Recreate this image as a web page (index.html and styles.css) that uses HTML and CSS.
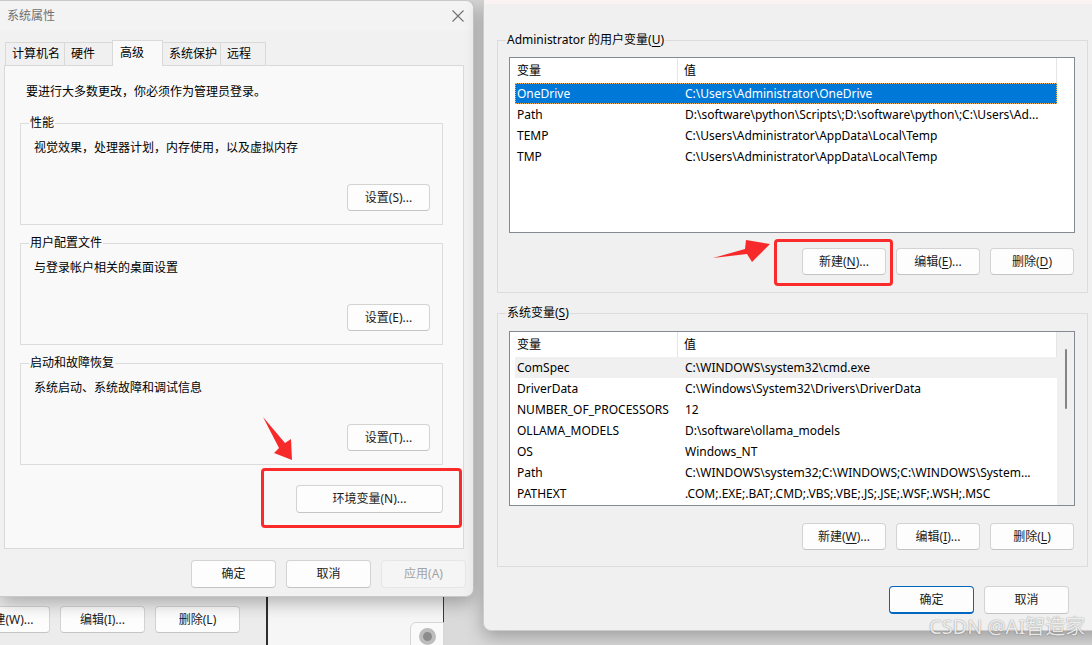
FILE: index.html
```html
<!DOCTYPE html>
<html lang="zh-CN">
<head>
  <meta charset="UTF-8" />
  <title>系统属性 - 环境变量</title>
  <link rel="stylesheet" href="styles.css">
</head>
<body>
<div class="desk">

  <!-- windows lying behind the two dialogs -->
  <div class="backwin">
    <div class="btnrow">
      <button class="btn">新建(W)...</button>
      <button class="btn">编辑(I)...</button>
      <button class="btn">删除(L)</button>
    </div>
  </div>
  <div class="backwin2">
    <div class="tray-card"><span class="tray-icon"></span></div>
  </div>

  <!-- 系统属性 -->
  <div class="dialog sysprop">
    <div class="titlebar">
      <span>系统属性</span>
      <svg class="close" width="14" height="14" viewBox="0 0 14 14">
        <path d="M1.5 1.5L12.5 12.5M12.5 1.5L1.5 12.5" stroke="#707070" stroke-width="1.1" fill="none"/>
      </svg>
    </div>

    <div class="tabs">
      <div class="tab w1">计算机名</div>
      <div class="tab w2">硬件</div>
      <div class="tab w3 active">高级</div>
      <div class="tab w4">系统保护</div>
      <div class="tab w5">远程</div>
    </div>

    <div class="panel">
      <p class="intro">要进行大多数更改，你必须作为管理员登录。</p>

      <div class="group">
        <div class="group-title">性能</div>
        <div class="desc">视觉效果，处理器计划，内存使用，以及虚拟内存</div>
        <div class="actions"><button class="btn">设置(S)...</button></div>
      </div>

      <div class="group">
        <div class="group-title">用户配置文件</div>
        <div class="desc">与登录帐户相关的桌面设置</div>
        <div class="actions"><button class="btn">设置(E)...</button></div>
      </div>

      <div class="group">
        <div class="group-title">启动和故障恢复</div>
        <div class="desc">系统启动、系统故障和调试信息</div>
        <div class="actions"><button class="btn">设置(T)...</button></div>
      </div>

      <div class="actions env"><button class="btn wide">环境变量(N)...</button></div>
    </div>

    <div class="footer">
      <button class="btn big">确定</button>
      <button class="btn big">取消</button>
      <button class="btn big" disabled>应用(A)</button>
    </div>
  </div>

  <!-- 环境变量 -->
  <div class="dialog envvars">
    <div class="topstrip"></div>
    <div class="envbody">
      <div class="group vars">
        <div class="group-title">Administrator 的用户变量(<u>U</u>)</div>
        <div class="listbox">
          <div class="cols">
            <div class="lhead"><div class="c1">变量</div><div class="c2">值</div></div>
            <div class="row selected"><div class="c1">OneDrive</div><div class="c2">C:\Users\Administrator\OneDrive</div></div>
            <div class="row"><div class="c1">Path</div><div class="c2">D:\software\python\Scripts\;D:\software\python\;C:\Users\Ad...</div></div>
            <div class="row"><div class="c1">TEMP</div><div class="c2">C:\Users\Administrator\AppData\Local\Temp</div></div>
            <div class="row"><div class="c1">TMP</div><div class="c2">C:\Users\Administrator\AppData\Local\Temp</div></div>
          </div>
          <div class="scroll none"></div>
        </div>
        <div class="btnrow end">
          <button class="btn">新建(<u>N</u>)...</button>
          <button class="btn">编辑(<u>E</u>)...</button>
          <button class="btn">删除(<u>D</u>)</button>
        </div>
      </div>

      <div class="group vars sys">
        <div class="group-title">系统变量(<u>S</u>)</div>
        <div class="listbox short">
          <div class="cols">
            <div class="lhead"><div class="c1">变量</div><div class="c2">值</div></div>
            <div class="row hover"><div class="c1">ComSpec</div><div class="c2">C:\WINDOWS\system32\cmd.exe</div></div>
            <div class="row"><div class="c1">DriverData</div><div class="c2">C:\Windows\System32\Drivers\DriverData</div></div>
            <div class="row"><div class="c1">NUMBER_OF_PROCESSORS</div><div class="c2">12</div></div>
            <div class="row"><div class="c1">OLLAMA_MODELS</div><div class="c2">D:\software\ollama_models</div></div>
            <div class="row"><div class="c1">OS</div><div class="c2">Windows_NT</div></div>
            <div class="row"><div class="c1">Path</div><div class="c2">C:\WINDOWS\system32;C:\WINDOWS;C:\WINDOWS\System...</div></div>
            <div class="row"><div class="c1">PATHEXT</div><div class="c2">.COM;.EXE;.BAT;.CMD;.VBS;.VBE;.JS;.JSE;.WSF;.WSH;.MSC</div></div>
          </div>
          <div class="scroll"><div class="thumb"></div></div>
        </div>
        <div class="btnrow end low">
          <button class="btn">新建(<u>W</u>)...</button>
          <button class="btn">编辑(<u>I</u>)...</button>
          <button class="btn">删除(<u>L</u>)</button>
        </div>
      </div>

      <div class="footer env-footer">
        <button class="btn big default">确定</button>
        <button class="btn big">取消</button>
      </div>
    </div>
  </div>

  <!-- red annotations -->
  <div class="mark mark-env"></div>
  <div class="mark mark-new"></div>
  <svg class="arrow arrow-down" width="36" height="50" viewBox="0 0 36 50">
    <polygon points="3,3 25,29 31,25 32,46 14,39 19,34" fill="#f62a2a"/>
  </svg>
  <svg class="arrow arrow-right" width="66" height="32" viewBox="0 0 66 32">
    <polygon points="5,24 37,15 38,6 62,10 44,28 39,20" fill="#f62a2a"/>
  </svg>

  <div class="watermark">CSDN @AI智造家</div>
</div>
</body>
</html>
```

FILE: styles.css
```css
* {
  box-sizing: border-box;
}
html, body {
  margin: 0;
  padding: 0;
  width: 1092px;
  height: 645px;
  overflow: hidden;
  background: #dadada;
  color: #000;
  font-family: "Noto Sans", "Noto Sans CJK SC", sans-serif;
  font-size: 12px;
  line-height: 16px;
}
.desk {
  position: relative;
  width: 1092px;
  height: 645px;
}
u {
  text-decoration: underline;
  text-underline-offset: 2px;
}

/* buttons */
.btn {
  width: 84px;
  height: 27px;
  padding: 0;
  font: inherit;
  color: #1b1b1b;
  background: #fdfdfd;
  border: 1px solid #d3d3d3;
  border-bottom-color: #c4c4c4;
  border-radius: 4px;
  white-space: nowrap;
}
.btn.big {
  width: 85px;
  height: 28px;
}
.btn.wide {
  width: 147px;
  height: 28px;
}
.btn:disabled {
  color: #a3a3a3;
  background: #f5f5f5;
  border-color: #e6e6e6;
}
.btn.default {
  border: 1px solid #0067c0;
  border-bottom-width: 2px;
}

/* windows behind */
.backwin {
  position: absolute;
  left: -40px;
  top: 560px;
  width: 308px;
  height: 100px;
  background: #ececec;
  border-right: 2px solid #2e2e2e;
}
.backwin .btnrow {
  display: flex;
  gap: 10px;
  margin-top: 46px;
  padding-left: 5px;
}
.backwin .btn {
  width: 85px;
}
.backwin2 {
  position: absolute;
  left: 268px;
  top: 560px;
  width: 176px;
  height: 100px;
  background: #f6f6f6;
  border-right: 1px solid #3a3a3a;
}
.tray-card {
  margin: 62px 0 0 142px;
  width: 34px;
  height: 40px;
  background: #fafafa;
  border: 1px solid #d6d6d6;
  border-radius: 6px 0 0 0;
  display: flex;
  justify-content: center;
  padding-top: 5px;
}
.tray-icon {
  width: 17px;
  height: 17px;
  border-radius: 50%;
  background: #8c8c8c;
  border: 4px solid #bdbdbd;
}

/* dialogs */
.dialog {
  position: absolute;
  background: #f0f0f0;
  box-shadow: 0 6px 18px rgba(0, 0, 0, 0.28);
}
.sysprop {
  left: 0;
  top: 0;
  width: 474px;
  height: 597px;
  border: 1px solid #c9c9c9;
  border-left: none;
  border-radius: 0 8px 8px 0;
  background: #f1f1f1;
}
.titlebar {
  height: 30px;
  display: flex;
  align-items: center;
  justify-content: space-between;
  padding: 0 7px 0 7px;
  color: #707070;
  background: #f3f3f3;
  border-radius: 0 8px 0 0;
}
.close {
  margin-right: 1px;
}

/* tabs */
.tabs {
  display: flex;
  align-items: flex-end;
  height: 25px;
  margin: 9px 0 0 5px;
}
.tab {
  height: 23px;
  display: flex;
  align-items: center;
  padding-left: 6px;
  border: 1px solid #d9d9d9;
  border-bottom: none;
  background: #f0f0f0;
  margin-right: -1px;
}
.tab.active {
  height: 26px;
  padding-left: 7px;
  padding-bottom: 2px;
  background: #f9f9f9;
  margin-bottom: -1px;
  position: relative;
  z-index: 1;
}
.w1 { width: 60px; }
.w2 { width: 49px; }
.w3 { width: 51px; }
.w4 { width: 59px; }
.w5 { width: 46px; }

.panel {
  margin-left: 4px;
  width: 460px;
  height: 484px;
  padding: 18px 20px 0 15px;
  background: #f9f9f9;
  border: 1px solid #d9d9d9;
}
.intro {
  margin: 0 0 23px 6px;
}

/* group boxes: title sits on the top border */
.group {
  margin-top: 18px;
  padding: 0 12px 13px 12px;
  border: 1px solid #dcdcdc;
  background: #f9f9f9;
}
.group:first-of-type {
  margin-top: 0;
}
.group-title {
  display: table;
  margin: -9px 0 9px -4px;
  padding: 0 1px;
  line-height: 16px;
  background: inherit;
}
.desc {
  padding-left: 1px;
}
.actions {
  display: flex;
  justify-content: flex-end;
  margin-top: 28px;
}
.actions.env {
  margin-top: 20px;
}
.panel .group .btn {
  width: 83px;
}

.footer {
  display: flex;
  justify-content: flex-end;
  gap: 10px;
  margin-top: 11px;
  padding-right: 7px;
}

/* environment variables dialog */
.envvars {
  left: 483px;
  top: 0;
  width: 640px;
  height: 631px;
  border-left: 1px solid #cdcdcd;
  border-bottom: 1px solid #cdcdcd;
  border-radius: 0 0 0 8px;
}
.topstrip {
  height: 4px;
  background: #fbf3f3;
}
.envbody {
  width: 591px;
  margin-left: 13px;
  padding-top: 36px;
}
.group.vars {
  padding: 0 12px 17px 11px;
  background: #f0f0f0;
}
.group.vars .group-title {
  margin: -9px 0 9px -3px;
}
.group.vars.sys {
  margin-top: 20px;
  padding-bottom: 16px;
}
.group.vars.sys .group-title {
  margin-bottom: 10px;
}

.listbox {
  display: flex;
  height: 176px;
  border: 1px solid #858a91;
  background: #fff;
}
.listbox.short {
  height: 175px;
}
.cols {
  flex: 1;
  min-width: 0;
}
.scroll {
  width: 17px;
  background: #f0f0f0;
  padding: 17px 0 0 8px;
}
.scroll.none {
  background: #fff;
}
.thumb {
  width: 2px;
  height: 60px;
  border-radius: 1px;
  background: #858585;
}
.lhead {
  display: flex;
  height: 25px;
  line-height: 25px;
}
.lhead div {
  border-right: 1px solid #e5e5e5;
}
.lhead .c1 {
  width: 168px;
  padding-left: 7px;
}
.lhead .c2 {
  flex: 1;
  padding-left: 6px;
}
.row {
  display: flex;
  height: 21px;
  line-height: 21px;
  margin-left: 5px;
  white-space: nowrap;
}
.row .c1 {
  width: 164px;
  padding-left: 2px;
  overflow: hidden;
}
.row .c2 {
  flex: 1;
  padding-left: 6px;
  overflow: hidden;
}
.row.selected {
  background: #0078d7;
  color: #fff;
  outline: 1px dotted #f0b060;
  outline-offset: -1px;
}
.row.hover {
  background: #f0f0f0;
}

.btnrow.end {
  display: flex;
  justify-content: flex-end;
  gap: 10px;
  margin-top: 15px;
  padding-right: 1px;
}
.btnrow.low {
  margin-top: 17px;
}
.env-footer {
  margin-top: 19px;
  padding-right: 19px;
}

/* annotations */
.mark {
  position: absolute;
  border: 3px solid #fb2b2b;
  border-radius: 4px;
}
.mark-env {
  left: 261px;
  top: 468px;
  width: 201px;
  height: 60px;
}
.mark-new {
  left: 774px;
  top: 239px;
  width: 119px;
  height: 47px;
}
.arrow {
  position: absolute;
}
.arrow-down {
  left: 260px;
  top: 414px;
}
.arrow-right {
  left: 708px;
  top: 234px;
}
.watermark {
  position: absolute;
  left: 929px;
  top: 614px;
  font-size: 20px;
  line-height: 26px;
  white-space: nowrap;
  color: rgba(255, 255, 255, 0.85);
  text-shadow: 0 0 1px rgba(0, 0, 0, 0.35), 0 0 2px rgba(0, 0, 0, 0.2);
}
```
